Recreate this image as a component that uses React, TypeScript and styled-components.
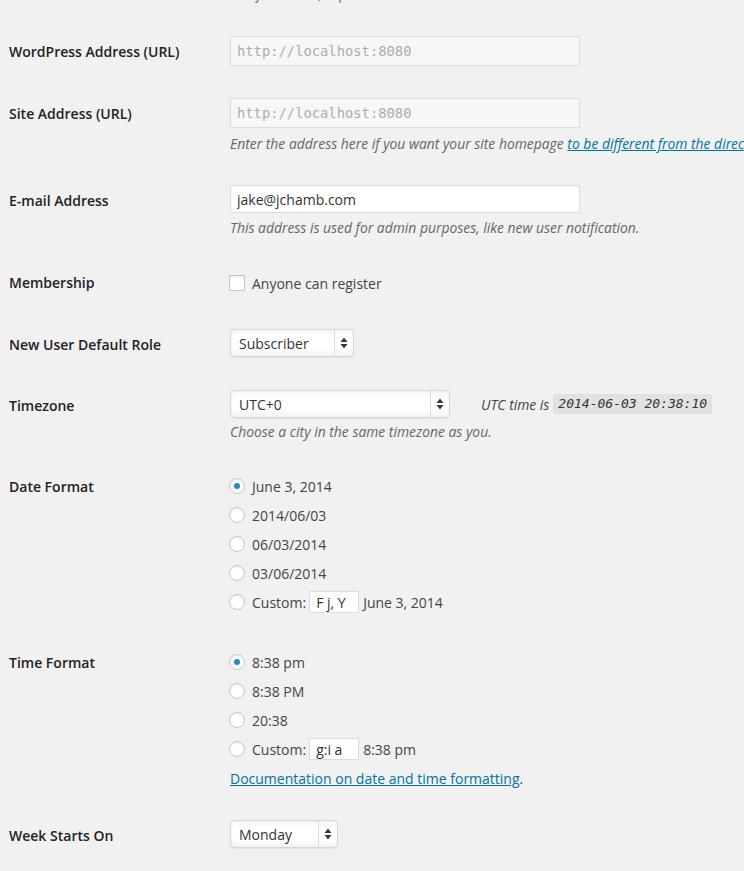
import React from "react";
import styled, { createGlobalStyle } from "styled-components";

const Global = createGlobalStyle`
  html, body { margin: 0; padding: 0; background: #f1f1f1; }
  body {
    width: 744px;
    height: 871px;
    overflow: hidden;
    font-family: "Open Sans", "Liberation Sans", sans-serif;
    font-size: 14px;
    color: #444;
  }
`;

const Page = styled.div`
  padding-left: 9px;
  width: 1100px;
`;

const Row = styled.div<{ $pt: number }>`
  display: grid;
  grid-template-columns: 220px 1fr;
  padding-top: ${(p) => p.$pt}px;
`;

const Label = styled.div<{ $offset: number }>`
  padding-top: ${(p) => p.$offset}px;
  font-size: 14px;
  line-height: 18px;
  font-weight: 600;
  color: #222;
`;

const Field = styled.div`
  display: flex;
  flex-direction: column;
  align-items: flex-start;
`;

const Description = styled.p<{ $mt: number }>`
  margin: ${(p) => p.$mt}px 0 0 1px;
  font-size: 13.9px;
  line-height: 18px;
  font-style: italic;
  color: #666;
  white-space: nowrap;
`;

const Link = styled.a`
  color: #0074a2;
  text-decoration: underline;
`;

const TextInput = styled.input<{ $h: number; $mono?: boolean }>`
  box-sizing: border-box;
  width: 350px;
  height: ${(p) => p.$h}px;
  margin: 0 0 0 1px;
  padding: 0 6px;
  border: 1px solid #dddddd;
  border-radius: 0;
  outline: none;
  font-family: ${(p) =>
    p.$mono ? '"DejaVu Sans Mono", "Liberation Mono", monospace' : '"Open Sans", sans-serif'};
  font-size: ${(p) => (p.$mono ? "13.8px" : "14px")};
  color: ${(p) => (p.$mono ? "#adadad" : "#333")};
  background: ${(p) => (p.$mono ? "#f7f7f7" : "#ffffff")};
  box-shadow: ${(p) => (p.$mono ? "none" : "inset 0 1px 2px rgba(0,0,0,0.04)")};
`;

const SmallInput = styled.input`
  box-sizing: border-box;
  width: 50px;
  height: 22px;
  margin: 0;
  padding: 0 6px;
  border: 1px solid #dddddd;
  outline: none;
  background: #fff;
  font-family: "Open Sans", sans-serif;
  font-size: 14px;
  color: #333;
`;

const CheckLine = styled.label`
  display: flex;
  align-items: center;
  height: 22px;
  gap: 7px;
  font-size: 14px;
  color: #444;
`;

const CheckBox = styled.span`
  box-sizing: border-box;
  width: 16px;
  height: 16px;
  flex: none;
  border: 1px solid #c4c7ca;
  background: #fff;
  box-shadow: inset 0 1px 2px rgba(0, 0, 0, 0.08);
`;

const Options = styled.div`
  display: flex;
  flex-direction: column;
  gap: 7px;
`;

const Radio = styled.span`
  box-sizing: border-box;
  width: 16px;
  height: 16px;
  flex: none;
  border-radius: 50%;
  border: 1px solid #c4c7ca;
  background: #fff;
  box-shadow: inset 0 1px 2px rgba(0, 0, 0, 0.08);
  display: flex;
  align-items: center;
  justify-content: center;
`;

const Dot = styled.span`
  width: 6px;
  height: 6px;
  border-radius: 50%;
  background: #1e8cbe;
`;

const Custom = styled.span`
  display: flex;
  align-items: center;
  gap: 4px;
`;

const CustomText = styled.span`
  margin-right: -1px;
`;

const SelectBox = styled.div<{ $w: number }>`
  box-sizing: border-box;
  width: ${(p) => p.$w}px;
  height: 28px;
  margin-left: 1px;
  display: flex;
  align-items: stretch;
  border: 1px solid #d6d6d6;
  border-radius: 4px;
  background: linear-gradient(#f6f6f6, #ffffff 30%, #ffffff 70%, #f3f3f3);
  box-shadow: 0 1px 1px rgba(0, 0, 0, 0.06), inset 1px 0 2px rgba(0, 0, 0, 0.04);
`;

const SelectValue = styled.span`
  flex: 1;
  display: flex;
  align-items: center;
  padding-left: 8px;
  font-size: 14px;
  color: #333;
`;

const SelectArrow = styled.span`
  width: 18px;
  flex: none;
  border-left: 1px solid #dcdcdc;
  display: flex;
  align-items: center;
  justify-content: center;
`;

const InlineRow = styled.div`
  display: flex;
  align-items: center;
`;

const UtcInfo = styled.span`
  margin-left: 31px;
  font-size: 13.9px;
  font-style: italic;
  color: #444;
  display: flex;
  align-items: center;
`;

const Code = styled.code`
  margin-left: 4px;
  padding: 0 5px;
  height: 20px;
  line-height: 20px;
  background: #e2e2e2;
  font-family: "DejaVu Sans Mono", "Liberation Mono", monospace;
  font-style: italic;
  font-size: 13px;
  color: #333;
`;

const DocLine = styled.p`
  margin: 10px 0 0 1px;
  font-size: 14px;
  line-height: 18px;
  color: #444;
`;

const Arrows = () => (
  <svg width="8" height="12" viewBox="0 0 8 12" aria-hidden>
    <path d="M0.5 5 L4 0.5 L7.5 5 Z" fill="#3a3a3a" />
    <path d="M0.5 7 L4 11.5 L7.5 7 Z" fill="#3a3a3a" />
  </svg>
);

const Select = ({ value, w }: { value: string; w: number }) => (
  <SelectBox $w={w}>
    <SelectValue>{value}</SelectValue>
    <SelectArrow>
      <Arrows />
    </SelectArrow>
  </SelectBox>
);

const RadioOption = ({ checked, children }: { checked?: boolean; children: React.ReactNode }) => (
  <CheckLine>
    <Radio>{checked ? <Dot /> : null}</Radio>
    {children}
  </CheckLine>
);

export default function App() {
  return (
    <>
      <Global />
      <Page>
        <Row $pt={0}>
          <div />
          <Field>
            <Description $mt={-15}>In a few words, explain what this site is about.</Description>
          </Field>
        </Row>

        <Row $pt={33}>
          <Label $offset={7}>WordPress Address (URL)</Label>
          <Field>
            <TextInput $h={30} $mono readOnly value="http://localhost:8080" />
          </Field>
        </Row>

        <Row $pt={32}>
          <Label $offset={7}>Site Address (URL)</Label>
          <Field>
            <TextInput $h={30} $mono readOnly value="http://localhost:8080" />
            <Description $mt={7}>
              Enter the address here if you want your site homepage{" "}
              <Link href="#">to be different from the directory</Link> you installed WordPress.
            </Description>
          </Field>
        </Row>

        <Row $pt={32}>
          <Label $offset={7}>E-mail Address</Label>
          <Field>
            <TextInput $h={28} readOnly value="jake@jchamb.com" />
            <Description $mt={6}>
              This address is used for admin purposes, like new user notification.
            </Description>
          </Field>
        </Row>

        <Row $pt={35}>
          <Label $offset={2}>Membership</Label>
          <Field>
            <CheckLine>
              <CheckBox />
              Anyone can register
            </CheckLine>
          </Field>
        </Row>

        <Row $pt={35}>
          <Label $offset={7}>New User Default Role</Label>
          <Field>
            <Select value="Subscriber" w={124} />
          </Field>
        </Row>

        <Row $pt={33}>
          <Label $offset={7}>Timezone</Label>
          <Field>
            <InlineRow>
              <Select value="UTC+0" w={220} />
              <UtcInfo>
                UTC time is <Code>2014-06-03 20:38:10</Code>
              </UtcInfo>
            </InlineRow>
            <Description $mt={5}>Choose a city in the same timezone as you.</Description>
          </Field>
        </Row>

        <Row $pt={34}>
          <Label $offset={3}>Date Format</Label>
          <Field>
            <Options>
              <RadioOption checked>June 3, 2014</RadioOption>
              <RadioOption>2014/06/03</RadioOption>
              <RadioOption>06/03/2014</RadioOption>
              <RadioOption>03/06/2014</RadioOption>
              <RadioOption>
                <Custom>
                  <CustomText>Custom:</CustomText>
                  <SmallInput readOnly value="F j, Y" />
                  <span>June 3, 2014</span>
                </Custom>
              </RadioOption>
            </Options>
          </Field>
        </Row>

        <Row $pt={38}>
          <Label $offset={3}>Time Format</Label>
          <Field>
            <Options>
              <RadioOption checked>8:38 pm</RadioOption>
              <RadioOption>8:38 PM</RadioOption>
              <RadioOption>20:38</RadioOption>
              <RadioOption>
                <Custom>
                  <CustomText>Custom:</CustomText>
                  <SmallInput readOnly value="g:i a" />
                  <span>8:38 pm</span>
                </Custom>
              </RadioOption>
            </Options>
            <DocLine>
              <Link href="#">Documentation on date and time formatting</Link>.
            </DocLine>
          </Field>
        </Row>

        <Row $pt={32}>
          <Label $offset={7}>Week Starts On</Label>
          <Field>
            <Select value="Monday" w={108} />
          </Field>
        </Row>
      </Page>
    </>
  );
}
